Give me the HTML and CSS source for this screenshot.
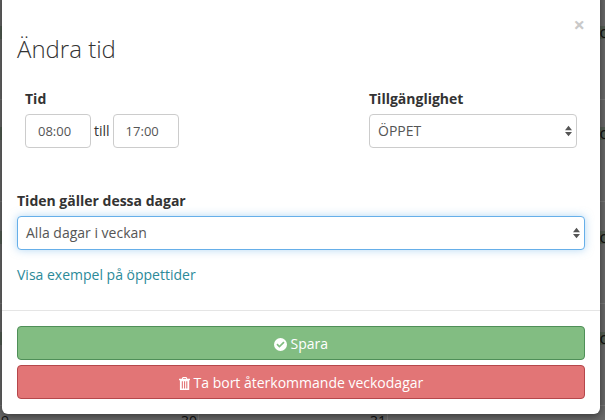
FILE: index.html
```html
<!DOCTYPE html>
<html lang="sv">
<head>
    <meta charset="UTF-8">
    <title>Ändra tid</title>
    <link rel="stylesheet" href="styles.css">
</head>
<body>
    <div class="backdrop">
        <div class="edge-row edge-row-1"><span>o</span></div>
        <div class="edge-row edge-row-2"><span>o</span></div>
        <div class="edge-row edge-row-3"><span>o</span></div>
        <div class="edge-row edge-row-4"><span>o</span></div>
        <div class="edge-col edge-col-1"></div>
        <div class="edge-col edge-col-2"></div>
        <span class="date date-left">9</span>
        <span class="date date-mid">30</span>
        <span class="date date-right">31</span>
    </div>
    <div class="modal">
        <div class="modal-header">
            <span class="close">×</span>
            <h4>Ändra tid</h4>
        </div>
        <div class="modal-body">
            <div class="row">
                <div class="col-time">
                    <label>Tid</label>
                    <div class="time-inputs">
                        <input class="control time" type="text" value="08:00">
                        <span class="till">till</span>
                        <input class="control time" type="text" value="17:00">
                    </div>
                </div>
                <div class="col-avail">
                    <label>Tillgänglighet</label>
                    <div class="control select">ÖPPET
                        <svg class="arrows" viewBox="0 0 8 12"><path d="M4 0 8 5H0ZM4 12 0 7H8Z"/></svg>
                    </div>
                </div>
            </div>
            <label class="days-label">Tiden gäller dessa dagar</label>
            <div class="control select focus">Alla dagar i veckan
                <svg class="arrows" viewBox="0 0 8 12"><path d="M4 0 8 5H0ZM4 12 0 7H8Z"/></svg>
            </div>
            <a class="examples" href="#">Visa exempel på öppettider</a>
        </div>
        <div class="modal-footer">
            <button class="btn btn-save">
                <svg class="icon" viewBox="0 0 14 14"><path fill-rule="evenodd" d="M7 0a7 7 0 1 1 0 14A7 7 0 0 1 7 0ZM3.9 6 2.6 7.3 5.8 10.6 11.4 5 10.1 3.7 5.8 8Z"/></svg>
                Spara
            </button>
            <button class="btn btn-delete">
                <svg class="icon" viewBox="0 0 12 14"><path fill-rule="evenodd" d="M4 0H8L9 2H12V3.4H11V14H1V3.4H0V2H3ZM4.6 1.2 4.2 2H7.8L7.4 1.2ZM3 4.5V12.4H4.2V4.5ZM5.4 4.5V12.4H6.6V4.5ZM7.8 4.5V12.4H9V4.5Z"/></svg>
                Ta bort återkommande veckodagar
            </button>
        </div>
    </div>
</body>
</html>
```

FILE: styles.css
```css
html, body {
    margin: 0;
    height: 420px;
    overflow: hidden;
}
body {
    background: #6a6a6a;
    font-family: "Open Sans", "Liberation Sans", sans-serif;
    font-size: 14px;
    color: #333;
    position: relative;
}
.backdrop {
    position: absolute;
    inset: 0;
    background: repeating-linear-gradient(to bottom, transparent 0, transparent 99px, #7a7a7a 99px, #7a7a7a 100px, transparent 100px, transparent 102px);
}
.edge-row {
    position: absolute;
    left: 0;
    right: 0;
    height: 13px;
    background: #556055;
    color: #111;
    font-size: 16px;
    line-height: 13px;
    text-align: right;
}
.edge-row span {
    margin-right: -4px;
}
.edge-row-1 {
    top: 26px;
}
.edge-row-2 {
    top: 127px;
}
.edge-row-3 {
    top: 231px;
}
.edge-row-4 {
    top: 332px;
}
.edge-col {
    position: absolute;
    top: 412px;
    bottom: 0;
    width: 1px;
    background: #7a7a7a;
}
.edge-col-1 {
    left: 198px;
}
.edge-col-2 {
    left: 387px;
}
.date {
    position: absolute;
    top: 411px;
    font-size: 14px;
    color: #111;
}
.date-left {
    left: 1px;
}
.date-mid {
    left: 181px;
}
.date-right {
    left: 370px;
}
.modal {
    position: absolute;
    left: 2px;
    top: -10px;
    width: 598px;
    height: 424px;
    background: #fff;
    border-radius: 6px;
    box-sizing: border-box;
    box-shadow: 0 2px 8px rgba(0, 0, 0, .5);
}
.modal-header {
    padding: 40px 15px 0;
    position: relative;
}
.modal-header h4 {
    margin: 0;
    font-size: 24px;
    font-weight: 300;
    line-height: 38px;
}
.close {
    position: absolute;
    right: 15px;
    top: 23px;
    font-size: 20px;
    font-weight: 700;
    line-height: 24px;
    color: #c9c9c9;
}
.modal-body {
    padding: 21px 15px 0;
}
.row {
    display: flex;
    padding: 0 8px;
    justify-content: space-between;
}
label {
    display: block;
    font-weight: 700;
    font-size: 14px;
    line-height: 20px;
    margin-bottom: 5px;
}
.time-inputs {
    display: flex;
    align-items: center;
    gap: 3px;
}
.till {
    line-height: 20px;
}
.control {
    box-sizing: border-box;
    height: 34px;
    border: 1px solid #ccc;
    border-radius: 4px;
    background: #fff;
    color: #555;
    font: 14px/32px "Open Sans", "Liberation Sans", sans-serif;
}
.time {
    width: 66px;
    font-size: 13px;
    padding: 0 0 0 12px;
}
.col-avail {
    width: 208px;
}
.select {
    position: relative;
    padding-left: 8px;
}
.arrows {
    position: absolute;
    right: 4px;
    top: 10px;
    width: 7px;
    height: 12px;
    fill: #555;
}
.days-label {
    margin-top: 43px;
}
.focus {
    border-color: #66afe9;
    box-shadow: 0 0 8px rgba(102, 175, 233, .5);
}
.examples {
    display: block;
    margin-top: 15px;
    color: #2b8a99;
    text-decoration: none;
    line-height: 20px;
}
.modal-footer {
    margin-top: 25px;
    padding: 15px;
    border-top: 1px solid #e5e5e5;
    display: flex;
    flex-direction: column;
    gap: 5px;
}
.btn {
    height: 34px;
    border-radius: 4px;
    color: #fff;
    font: 14px "Open Sans", "Liberation Sans", sans-serif;
    padding: 0;
}
.btn-save {
    background: #82bd82;
    border: 1px solid #4f8f58;
}
.btn-delete {
    background: #e27576;
    border: 1px solid #b5474b;
}
.icon {
    height: 13px;
    fill: #fff;
    vertical-align: -2px;
}
```
